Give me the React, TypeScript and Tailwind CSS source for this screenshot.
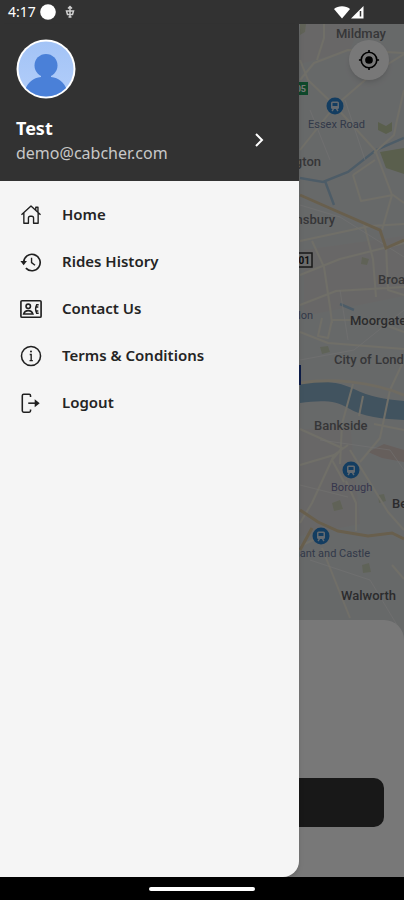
import React from "react";

type IconProps = { className?: string };

const iconBase = {
  viewBox: "0 0 24 24",
  fill: "none",
  stroke: "currentColor",
  strokeWidth: 1.5,
  "aria-hidden": true,
} as const;

function HomeIcon({ className }: IconProps) {
  return (
    <svg {...iconBase} className={className} strokeLinejoin="round">
      <path d="M1.6 11.8 12 2.2l10.4 9.6M4.2 9.8V21h5v-5.6a2 2 0 0 1 2-2h1.6a2 2 0 0 1 2 2V21h5V9.8M17.2 6.6V3.6h2.4v5.2" />
    </svg>
  );
}

function HistoryIcon({ className }: IconProps) {
  return (
    <svg {...iconBase} className={className}>
      <path d="M4 12.5a9 9 0 1 1 2.4 6.2" strokeWidth="1.8" />
      <path d="M.4 11h7.2L4 15.6z" fill="currentColor" stroke="none" />
      <path d="M12.6 7.4v5.2l3.8 3" />
    </svg>
  );
}

function ContactIcon({ className }: IconProps) {
  return (
    <svg {...iconBase} className={className}>
      <rect x="1" y="3" width="22" height="18" rx="1.2" strokeWidth="1.8" />
      <circle cx="9" cy="9" r="2.4" strokeWidth="1.8" />
      <path d="M4 17.4c.8-2.6 2.8-3.6 5-3.6s4.2 1 5 3.6z" strokeWidth="1.8" />
      <path d="M20.4 7.4h-2.2c-1.4 2.8-1.4 6.4 0 9.2h2.2M18 9.8h2M18 14.2h2" strokeWidth="1.6" />
    </svg>
  );
}

function InfoIcon({ className }: IconProps) {
  return (
    <svg {...iconBase} className={className}>
      <circle cx="12" cy="12" r="10.4" strokeWidth="1.7" />
      <path d="M10.6 10.4H12.2V17M10.4 17h3.6" />
      <circle cx="12" cy="7.2" r="1.1" fill="currentColor" stroke="none" />
    </svg>
  );
}

function LogoutIcon({ className }: IconProps) {
  return (
    <svg {...iconBase} className={className}>
      <path
        d="M11.5 5.5V4A1.5 1.5 0 0 0 10 2.5H4A1.5 1.5 0 0 0 2.5 4v16.5A1.5 1.5 0 0 0 4 22h6a1.5 1.5 0 0 0 1.5-1.5V19"
        strokeWidth="1.7"
      />
      <path d="M9 12.2h8.5" strokeWidth="1.7" />
      <path d="M16 7.8l5.5 4.4-5.5 4.4z" fill="currentColor" stroke="none" />
    </svg>
  );
}

function Avatar() {
  return (
    <svg viewBox="0 0 60 60" className="size-15" role="img" aria-label="Profile photo">
      <defs>
        <clipPath id="face">
          <circle cx="30" cy="30" r="27.5" />
        </clipPath>
        <linearGradient id="sky" x1="0" y1="0" x2="0" y2="1">
          <stop offset="0" stopColor="#a2c3f6" />
          <stop offset="1" stopColor="#b3cefa" />
        </linearGradient>
      </defs>
      <circle cx="30" cy="30" r="29.5" fill="#fff" />
      <g clipPath="url(#face)">
        <rect width="60" height="60" fill="url(#sky)" />
        <circle cx="30" cy="26.5" r="11.5" fill="#4a80d8" />
        <path d="M25 34h10v4c8 1 13 5 16 13v9H9v-9c3-8 8-12 16-13z" fill="#4a80d8" />
      </g>
    </svg>
  );
}

function Station({ x, y }: { x: number; y: number }) {
  return (
    <g transform={`translate(${x} ${y})`}>
      <circle r="8.5" fill="#2a83cf" />
      <rect x="-4" y="-4.5" width="8" height="7.5" rx="1.5" fill="#d4e2ee" />
      <rect x="-2.5" y="-3" width="5" height="3" fill="#2a83cf" />
      <path d="M-3 5l1.5-2M3 5L1.5 3" stroke="#d4e2ee" strokeWidth="1.3" />
    </g>
  );
}

function CityMap() {
  return (
    <svg
      viewBox="0 24 404 616"
      preserveAspectRatio="xMaxYMin slice"
      className="block h-full w-full"
      role="img"
      aria-label="Map of London"
    >
      <rect y="24" width="404" height="616" fill="#dcdfe0" />
      <path d="M300 24h60l-10 26-50 14zM304 250l100-14v60l-100 20zM300 430l50-6 10 100-60 12z" fill="#dedcda" />
      <path d="M368 452l16-8 20 6v12l-22-4z" fill="#d9c9c3" />
      <g fill="#bfcaa4">
        <path d="M380 152l24-4v26l-18-6zM378 122l8 4 6-4v9l-6 3-8-4z" />
        <path d="M300 24h6l-1 8-5 3zM320 347l8-1 2 6-8 2zM362 257l7 2-2 6-6-1zM378 495l6-1 2 7-7 2zM332 503l8-3 3 9-9 2zM362 565l7-2 2 9-8 1z" opacity=".6" />
      </g>
      <path d="M300 178l23 4 25-10 28-22 28-12M325 181l9 24M340 304l14 6" fill="none" stroke="#a5c4da" strokeWidth="2.5" />
      <path d="M300 383c18-3 38-2 54 6s30 10 50 12v19c-20-1-42-3-56-12-12-8-28-8-48-5z" fill="#8ab0c9" />
      <g fill="none" stroke="#eeebdd" strokeWidth="2" strokeLinejoin="round">
        <path d="M300 80l14-17 34-13 56 3M324 24v14l-7 22M300 150l35-44 37-32 32-20M300 60l8 20 27 26 40 44 17 45M404 90l-7 30-3 15-20 18" />
        <path d="M353 175l8 26 32-6 11 8M353 175l22-15M392 195l-10 35M300 241l70-15 34-2M300 275l40-16 64-16M312 241l12 26 6 40 2 16M364 224l9 35 3 38M386 245l2 45 16 5M300 305l36-14 68-4M332 320l-4 18-10-2 4-18M332 320h40l32 12M300 332l28 11 76 6" />
        <path d="M300 429l42 19-10 12 12 22M353 384l-11 40-2 40M363 396l-4 20M404 360l-14 30-10 48-20 24M404 430l-30-6M334 455l-22 48-12 20M300 465l34-10 14-10M346 481l10 22v28M350 450l38 62 16 18M322 548l28 70M300 546l22-10M392 565l12 14" />
      </g>
      <g fill="none" stroke="#f3f3f1" strokeWidth="1" opacity=".6">
        <path d="M300 205l40 12 64 40M340 290l8 50M404 310l-50 40-54 10M300 485l48 12M320 440l70 10 14 20M310 560l60 20 30 50M345 100l20 60M310 110l20 50" />
      </g>
      <g fill="none" stroke="#dec9a3" strokeWidth="3">
        <path d="M300 195l34 15 46 20 6 18 18-8" />
        <path d="M300 510l18 12 20 9 30 5 24-3 12 6M300 550l12-22" />
      </g>
      <path d="M300 383c30-5 70-2 104 12" fill="none" stroke="#ebe3ce" strokeWidth="3" />
      <Station x={335} y={106} />
      <Station x={351} y={470} />
      <Station x={321} y={536} />
      <path d="M296 82h12v13h-12z" fill="#1f9a5c" />
      <rect x="294" y="253" width="18" height="14" fill="#e6e6e6" stroke="#333" strokeWidth="1.5" />
      <path d="M298 365h3v20h-3z" fill="#1c3d9a" />
      <g className="font-['Roboto',sans-serif] text-[13px] font-medium" fill="#737477">
        <text x="336" y="38">Mildmay</text>
        <text x="321" y="166" textAnchor="end">Islington</text>
        <text x="335" y="224" textAnchor="end">Finsbury</text>
        <text x="378" y="284">Broadgate</text>
        <text x="350" y="325" fill="#5c5d60">Moorgate</text>
        <text x="334" y="364">City of London</text>
        <text x="314" y="430">Bankside</text>
        <text x="392" y="508" fill="#5c5d60">Bermondsey</text>
        <text x="341" y="600" fill="#5c5d60">Walworth</text>
      </g>
      <g className="font-['Roboto',sans-serif] text-[11px]" fill="#6b7a9b">
        <text x="308" y="128">Essex Road</text>
        <text x="331" y="491" fill="#7474a4">Borough</text>
        <text x="370" y="557" textAnchor="end">Elephant and Castle</text>
        <text x="313" y="319" textAnchor="end">Farringdon</text>
      </g>
      <text x="306" y="92" textAnchor="end" fill="#fff" className="font-['Roboto',sans-serif] text-[9px] font-bold">A105</text>
      <text x="310" y="264" textAnchor="end" fill="#222" className="font-['Roboto',sans-serif] text-[10px] font-bold">A201</text>
    </svg>
  );
}

const menu = [
  { label: "Home", Icon: HomeIcon },
  { label: "Rides History", Icon: HistoryIcon },
  { label: "Contact Us", Icon: ContactIcon },
  { label: "Terms & Conditions", Icon: InfoIcon },
  { label: "Logout", Icon: LogoutIcon },
];

function StatusBar() {
  return (
    <header className="flex h-6 shrink-0 items-center justify-between bg-[#323232] pr-10 pl-2 text-white">
      <div className="flex items-center gap-1 text-sm leading-6">
        <span>4:17</span>
        <svg viewBox="0 0 16 16" className="size-4" aria-hidden="true">
          <circle cx="8" cy="8" r="7.8" fill="#fff" />
        </svg>
        <svg viewBox="0 0 12 14" className="ml-1 h-3.5 w-3" fill="none" stroke="#d0d0d0" strokeWidth="1.5" aria-hidden="true">
          <path d="M6 2v10M4 3.5L6 1.5l2 2M2.500 6h7l-1 3.500h-5zM4.500 12h3" />
        </svg>
      </div>
      <svg viewBox="0 0 30 14" className="h-3.5 w-7.5" fill="#fff" aria-hidden="true">
        <path d="M0 4C4 .2 12 .2 16 4L8 13.5z" />
        <path d="M29.5 1v12.500H17z" />
        <path d="M26.5 6v5.500" stroke="#323232" strokeWidth="1.5" />
      </svg>
    </header>
  );
}

function Drawer() {
  return (
    <aside className="absolute inset-y-0 left-0 flex w-[299px] flex-col overflow-hidden rounded-br-2xl bg-[#f5f5f5] shadow-md">
      <div className="bg-[#323232] px-4 pt-[15px] pb-4">
        <Avatar />
        <button type="button" className="mt-4 flex w-full items-center justify-between pr-4 text-left">
          <span className="flex flex-col">
            <span className="text-lg leading-[26px] font-bold text-white">Test</span>
            <span className="text-base leading-6 text-[#c8c8c8]">demo@cabcher.com</span>
          </span>
          <svg viewBox="0 0 16 16" className="size-4" fill="none" stroke="#fff" strokeWidth="2" aria-hidden="true">
            <path d="M5 2l6 6-6 6" />
          </svg>
        </button>
      </div>
      <nav className="pt-[10px]">
        <ul>
          {menu.map(({ label, Icon }) => (
            <li key={label}>
              <a href="#" className="flex h-[47px] items-center gap-5 px-5 text-[15px] font-semibold text-[#242424]">
                <Icon className="size-[22px] text-[#202020]" />
                {label}
              </a>
            </li>
          ))}
        </ul>
      </nav>
    </aside>
  );
}

export default function App() {
  return (
    <div className="flex min-h-screen flex-col bg-black font-['Noto_Sans',sans-serif]">
      <StatusBar />
      <main className="relative flex flex-1 flex-col bg-white">
        <section className="relative min-h-80 flex-1">
          <div className="absolute inset-0">
            <CityMap />
          </div>
          <button
            type="button"
            aria-label="My location"
            className="absolute top-4 right-[15px] flex size-10 items-center justify-center rounded-full bg-white shadow-md"
          >
            <svg viewBox="0 0 24 24" className="size-[22px]" fill="none" stroke="#000" strokeWidth="1.8" aria-hidden="true">
              <circle cx="12" cy="12" r="8.5" />
              <circle cx="12" cy="12" r="4.2" fill="#000" stroke="none" />
              <path d="M12 1v3M12 20v3M1 12h3M20 12h3" />
            </svg>
          </button>
        </section>
        <section className="relative -mt-5 flex h-[257px] flex-col justify-end rounded-t-[20px] bg-white px-5 pb-[50px]">
          <button type="button" aria-label="Confirm" className="h-[49px] rounded-[10px] bg-[#343434]" />
        </section>
        <div className="absolute inset-0 bg-black/53" />
        <Drawer />
      </main>
      <footer className="flex h-[23px] shrink-0 items-center justify-center bg-black">
        <div className="h-1 w-[106px] rounded-full bg-white" />
      </footer>
    </div>
  );
}
